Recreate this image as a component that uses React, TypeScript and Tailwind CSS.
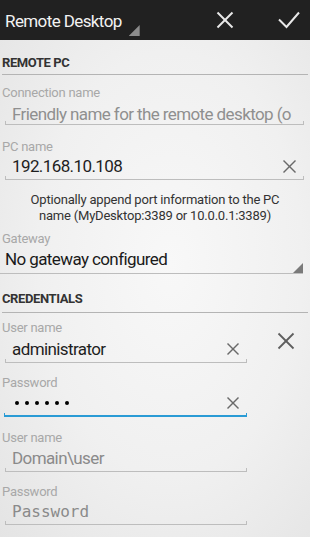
import React from 'react';

const XIcon: React.FC<{ size: number; color: string; width: number }> = ({ size, color, width }) => (
  <svg width={size} height={size} viewBox={`0 0 ${size} ${size}`} className="shrink-0 overflow-visible">
    <line x1="0.5" y1="0.5" x2={size - 0.5} y2={size - 0.5} stroke={color} strokeWidth={width} />
    <line x1={size - 0.5} y1="0.5" x2="0.5" y2={size - 0.5} stroke={color} strokeWidth={width} />
  </svg>
);

const Dots: React.FC = () => (
  <div className="flex flex-1 items-center gap-[6.4px] pl-[3px]">
    {[0, 1, 2, 3, 4, 5].map((i) => (
      <div key={i} className="h-[3.6px] w-[3.6px] rounded-full bg-black" />
    ))}
  </div>
);

const App: React.FC = () => {
  return (
    <div className="h-[537px] w-[310px] overflow-hidden font-['Roboto',sans-serif]">
      {/* action bar */}
      <div className="flex h-[40px] bg-[#212121]">
        <div className="flex pl-[5px]">
          <span className="self-center pt-[2px] text-[17px] leading-[20px] tracking-[-0.6px] text-[#f2f2f2]">Remote Desktop</span>
          <div className="mb-[4px] ml-[7px] h-[11px] w-[11px] self-end bg-[#8c8c8c] [clip-path:polygon(100%_0,100%_100%,0_100%)]" />
        </div>
        <div className="ml-auto flex items-center pr-[10px]">
          <XIcon size={16} color="#e8e8e8" width={2} />
          <svg width="22" height="16" viewBox="0 0 22 16" className="ml-[45px] overflow-visible">
            <polyline points="1,7.5 8.5,15 21,0.5" fill="none" stroke="#e8e8e8" strokeWidth="2" />
          </svg>
        </div>
      </div>

      <div className="flex h-[497px] flex-col bg-[radial-gradient(ellipse_at_55%_45%,#f8f8f8_0%,#f0f0f0_55%,#e4e4e4_100%)]">
        <div className="mx-[2px] mt-[15px] border-b border-[#b4b4b4] pb-[3px] text-[13px] font-bold leading-[16px] tracking-[-0.4px] text-[#333]">
          REMOTE PC
        </div>

        <div className="mt-[10px] pl-[2px] text-[13px] leading-[16px] tracking-[-0.25px] text-[#a8a8a8]">Connection name</div>
        <div className="mr-[15px] mt-[3px] overflow-hidden whitespace-nowrap pl-[12px] text-[17px] leading-[20px] tracking-[-0.6px] text-[#8f8f8f]">
          Friendly name for the remote desktop (o
        </div>
        <div className="-mt-[3px] ml-[5px] mr-[6px] h-[4px] border-x border-b border-[#bdbdbd]" />

        <div className="mt-[14px] pl-[2px] text-[13px] leading-[16px] tracking-[-0.25px] text-[#a8a8a8]">PC name</div>
        <div className="mt-[1px] flex h-[20px] items-center pl-[12px] pr-[14px]">
          <span className="flex-1 text-[17px] leading-[20px] tracking-[-0.6px] text-[#1e1e1e]">192.168.10.108</span>
          <XIcon size={13} color="#6a6a6a" width={1.4} />
        </div>
        <div className="ml-[5px] mr-[6px] h-[4px] border-x border-b border-[#bdbdbd]" />

        <div className="mt-[12px] text-center text-[13px] leading-[16px] tracking-[-0.2px] text-[#333]">
          Optionally append port information to the PC
          <br />
          name (MyDesktop:3389 or 10.0.0.1:3389)
        </div>

        <div className="mt-[7px] pl-[2px] text-[13px] leading-[16px] tracking-[-0.25px] text-[#a8a8a8]">Gateway</div>
        <div className="mr-[7px] mt-[2px] flex border-b border-[#bdbdbd] pb-[4px]">
          <span className="flex-1 pl-[5px] text-[17px] leading-[20px] tracking-[-0.6px] text-[#1a1a1a]">No gateway configured</span>
          <div className="-mb-[4px] h-[10px] w-[10px] self-end bg-[#7a7a7a] [clip-path:polygon(100%_0,100%_100%,0_100%)]" />
        </div>

        <div className="mx-[2px] mt-[17px] border-b border-[#b4b4b4] pb-[5px] text-[13px] font-bold leading-[16px] tracking-[-0.4px] text-[#333]">
          CREDENTIALS
        </div>

        <div className="flex">
          <div className="flex w-[247px] flex-col">
            <div className="mt-[7px] pl-[2px] text-[13px] leading-[16px] tracking-[-0.25px] text-[#a8a8a8]">User name</div>
            <div className="mt-[3px] flex h-[20px] items-center pl-[12px] pr-[8px]">
              <span className="flex-1 text-[17px] leading-[20px] tracking-[-0.6px] text-[#1e1e1e]">administrator</span>
              <XIcon size={12} color="#6a6a6a" width={1.4} />
            </div>
            <div className="ml-[5px] h-[4px] border-x border-b border-[#bdbdbd]" />

            <div className="mt-[12px] pl-[2px] text-[13px] leading-[16px] tracking-[-0.25px] text-[#a8a8a8]">Password</div>
            <div className="mt-[2px] flex h-[20px] items-center pl-[12px] pr-[8px]">
              <Dots />
              <XIcon size={12} color="#6a6a6a" width={1.4} />
            </div>
            <div className="ml-[4px] h-[4px] border-x border-b-2 border-[#2a9bd5]" />

            <div className="mt-[13px] pl-[2px] text-[13px] leading-[16px] tracking-[-0.25px] text-[#a8a8a8]">User name</div>
            <div className="mt-[2px] pl-[12px] text-[17px] leading-[20px] tracking-[-0.6px] text-[#8a8a8a]">Domain\user</div>
            <div className="ml-[5px] h-[4px] border-x border-b border-[#bdbdbd]" />

            <div className="mt-[12px] pl-[2px] text-[13px] leading-[16px] tracking-[-0.25px] text-[#a8a8a8]">Password</div>
            <div className="mt-[2px] pl-[12px] font-['DejaVu_Sans_Mono',monospace] text-[16px] leading-[20px] text-[#8a8a8a]">
              Password
            </div>
            <div className="-mt-[1px] ml-[5px] h-[4px] border-x border-b border-[#bdbdbd]" />
          </div>
          <div className="ml-[31px] mt-[20px]">
            <XIcon size={16} color="#5e5e5e" width={1.8} />
          </div>
        </div>
      </div>
    </div>
  );
};

export default App;
